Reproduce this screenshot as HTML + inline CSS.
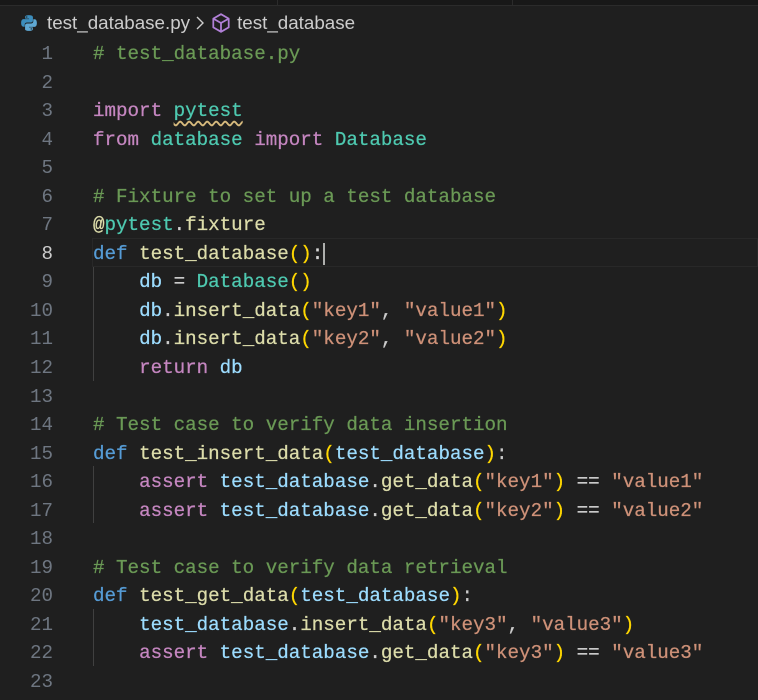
<!DOCTYPE html>
<html><head><meta charset="utf-8"><style>
body{margin:0;width:758px;height:700px;background:#1f1f1f;overflow:hidden;position:relative;font-family:"Liberation Mono",monospace}
.top{position:absolute;left:0;top:0;width:758px;height:5px;background:#181818;border-bottom:1px solid #2b2b2b}
.vl{position:absolute;top:0;height:5px;width:1px;background:#2b2b2b}
.bc{position:absolute;top:9px;left:20px;font-family:"Liberation Sans",sans-serif;font-size:18.8px;color:#cccccc;display:flex;align-items:center;height:27px}
.nums{position:absolute;left:0;top:40px;width:53px;text-align:right;color:#6e7681;font-size:19.2px;line-height:28.55px}
.code{position:absolute;left:93px;top:40px;white-space:pre;font-size:19.2px;color:#cccccc;line-height:28.55px;margin:0;font-family:"Liberation Mono",monospace;-webkit-text-stroke:0.25px currentColor}
.c{color:#6a9955}.k{color:#569cd6}.i{color:#c586c0}.f{color:#dcdcaa}.t{color:#4ec9b0}.v{color:#9cdcfe}.s{color:#ce9178}.y{color:#ffd700}.w{color:#d4d4d4}
.hl{position:absolute;left:92px;right:0;border:1px solid #282828;box-sizing:border-box}
.guide{position:absolute;left:93px;width:1px;background:#404040}
</style></head><body>
<div class="top"></div><div class="vl" style="left:277px"></div><div class="vl" style="left:512px"></div>
<div class="bc">
<svg width="18" height="18" viewBox="0 0 16 16"><path d="M7.9 1C4.4 1 4.6 2.5 4.6 2.5V4.1h3.4v.5H3.3S1 4.3 1 7.9s2 3.4 2 3.4h1.2V9.6s-.1-2 2-2h3.4s1.9 0 1.9-1.9V2.9S11.8 1 7.9 1zM6 2.1a.6.6 0 110 1.2.6.6 0 010-1.2z" fill="#3c8dbc"/><path d="M8.1 15c3.5 0 3.3-1.5 3.3-1.5v-1.6H8v-.5h4.7s2.3.3 2.3-3.3-2-3.4-2-3.4h-1.2v1.7s.1 2-2 2H6.4s-1.9 0-1.9 1.9v3.1S4.2 15 8.1 15zm1.9-1.1a.6.6 0 110-1.2.6.6 0 010 1.2z" fill="#5fa8d3"/></svg>
<span style="margin-left:9px">test_database.py</span>
<svg width="16" height="18" viewBox="0 0 16 18" style="margin:0 2px 0 2px"><path d="M5 3l6 6-6 6" stroke="#cccccc" stroke-width="1.4" fill="none"/></svg>
<svg width="22" height="22" viewBox="0 0 20 20"><path d="M10 2l7 4v8l-7 4-7-4V6z M3 6l7 4 7-4 M10 10v8" stroke="#b180d7" stroke-width="1.6" fill="none" stroke-linejoin="round"/></svg>
<span style="margin-left:5px">test_database</span>
</div>
<div class="hl" style="top:238px;height:29px"></div>
<div class="guide" style="top:267px;height:114px"></div>
<div class="guide" style="top:466px;height:57px"></div>
<div class="guide" style="top:609px;height:57px"></div>
<div class="nums">1<br>2<br>3<br>4<br>5<br>6<br>7<br><span style="color:#cccccc">8</span><br>9<br>10<br>11<br>12<br>13<br>14<br>15<br>16<br>17<br>18<br>19<br>20<br>21<br>22<br>23</div>
<pre class="code"><span class="c"># test_database.py</span>

<span class="i">import</span> <span class="t" style="text-decoration:underline wavy #d7ba7d;text-underline-offset:4px">pytest</span>
<span class="i">from</span> <span class="t">database</span> <span class="i">import</span> <span class="t">Database</span>

<span class="c"># Fixture to set up a test database</span>
<span class="f">@</span><span class="t">pytest</span><span class="w">.</span><span class="f">fixture</span>
<span class="k">def</span> <span class="f">test_database</span><span class="y">()</span><span class="w">:</span><span style="border-left:2px solid #aeafad"></span>
    <span class="v">db</span> <span class="w">=</span> <span class="t">Database</span><span class="y">()</span>
    <span class="v">db</span>.<span class="f">insert_data</span><span class="y">(</span><span class="s">"key1"</span>, <span class="s">"value1"</span><span class="y">)</span>
    <span class="v">db</span>.<span class="f">insert_data</span><span class="y">(</span><span class="s">"key2"</span>, <span class="s">"value2"</span><span class="y">)</span>
    <span class="i">return</span> <span class="v">db</span>

<span class="c"># Test case to verify data insertion</span>
<span class="k">def</span> <span class="f">test_insert_data</span><span class="y">(</span><span class="v">test_database</span><span class="y">)</span>:
    <span class="i">assert</span> <span class="v">test_database</span>.<span class="f">get_data</span><span class="y">(</span><span class="s">"key1"</span><span class="y">)</span> <span class="w">==</span> <span class="s">"value1"</span>
    <span class="i">assert</span> <span class="v">test_database</span>.<span class="f">get_data</span><span class="y">(</span><span class="s">"key2"</span><span class="y">)</span> <span class="w">==</span> <span class="s">"value2"</span>

<span class="c"># Test case to verify data retrieval</span>
<span class="k">def</span> <span class="f">test_get_data</span><span class="y">(</span><span class="v">test_database</span><span class="y">)</span>:
    <span class="v">test_database</span>.<span class="f">insert_data</span><span class="y">(</span><span class="s">"key3"</span>, <span class="s">"value3"</span><span class="y">)</span>
    <span class="i">assert</span> <span class="v">test_database</span>.<span class="f">get_data</span><span class="y">(</span><span class="s">"key3"</span><span class="y">)</span> <span class="w">==</span> <span class="s">"value3"</span>
</pre>
</body></html>
